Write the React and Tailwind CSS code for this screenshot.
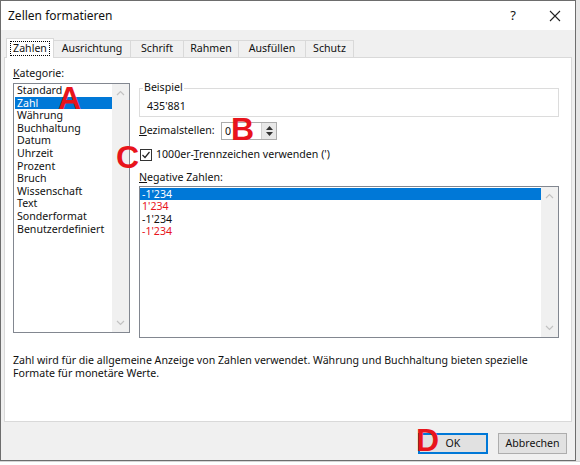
import React from "react";

const kategorien = [
  "Standard",
  "Zahl",
  "Währung",
  "Buchhaltung",
  "Datum",
  "Uhrzeit",
  "Prozent",
  "Bruch",
  "Wissenschaft",
  "Text",
  "Sonderformat",
  "Benutzerdefiniert",
];

const negative = [
  { text: "-1'234", red: false },
  { text: "1'234", red: true },
  { text: "-1'234", red: false },
  { text: "-1'234", red: true },
];

const tabs = [
  { label: "Zahlen", w: "w-[48px]" },
  { label: "Ausrichtung", w: "w-[77px]" },
  { label: "Schrift", w: "w-[53px]" },
  { label: "Rahmen", w: "w-[55px]" },
  { label: "Ausfüllen", w: "w-[67px]" },
  { label: "Schutz", w: "w-[48px]" },
];

function Chevron({ up }) {
  return (
    <svg width="9" height="6" viewBox="0 0 9 6" className="text-[#c2c2c2]">
      <path d={up ? "M1 5 L4.5 1.5 L8 5" : "M1 1 L4.5 4.5 L8 1"} fill="none" stroke="currentColor" strokeWidth="1.2" />
    </svg>
  );
}

function Scrollbar() {
  return (
    <div className="w-[17px] bg-[#f0f0f0] flex flex-col items-center justify-between py-[6px]">
      <Chevron up />
      <Chevron />
    </div>
  );
}

function Marker({ children, className }) {
  return (
    <span
      className={
        "absolute text-[#e8141c] text-[32px] leading-none font-bold pointer-events-none " + className
      }
      style={{ fontFamily: "'Liberation Sans', Arial, sans-serif" }}
    >
      {children}
    </span>
  );
}

export default function App() {
  return (
    <div
      className="relative w-[580px] h-[465px] bg-white overflow-hidden flex flex-col text-[10.6px] text-[#111]"
      style={{ fontFamily: "'Noto Sans', 'Open Sans', sans-serif" }}
    >
      <div className="flex">
        {/* dialog */}
        <div className="w-[576px] h-[461px] border border-[#6d6d6d] bg-[#f0f0f0] flex flex-col">
          <div className="h-[29px] bg-white flex items-center pl-[7px] pr-[14px] text-[12px]">
            <span className="flex-1">Zellen formatieren</span>
            <span className="mr-[33px] text-[13px]">?</span>
            <svg width="12" height="12" viewBox="0 0 12 12">
              <path d="M1 1 L11 11 M11 1 L1 11" stroke="#222" strokeWidth="1.1" />
            </svg>
          </div>

          <div className="flex flex-col px-[3px] pt-[8px]">
            {/* tabs */}
            <div className="flex h-[19px] pl-[2px] items-end">
              {tabs.map((t, i) =>
                i === 0 ? (
                  <div
                    key={t.label}
                    className={t.w + " h-[20px] -mb-[1px] bg-white border border-b-0 border-[#d9d9d9] flex items-center justify-center z-10"}
                  >
                    <span className="border border-dotted border-black px-[2px] leading-[13px]">{t.label}</span>
                  </div>
                ) : (
                  <div
                    key={t.label}
                    className={t.w + " h-[17px] bg-[#f0f0f0] border border-b-0 border-l-0 border-[#d9d9d9] flex items-center justify-center"}
                  >
                    {t.label}
                  </div>
                )
              )}
            </div>

            {/* panel */}
            <div className="h-[365px] bg-white border border-[#d9d9d9] flex flex-col px-[8px] pt-[7px]">
              <div className="flex gap-[9px]">
                <div className="w-[117px] flex flex-col">
                  <div className="h-[16px] leading-[16px]">
                    <span className="underline">K</span>ategorie:
                  </div>
                  <div className="h-[250px] mt-[2px] border border-[#828790] flex">
                    <div className="flex-1 flex flex-col pl-[1px]">
                      {kategorien.map((k) => (
                        <div
                          key={k}
                          className={
                            "h-[12.6px] leading-[12.6px] pl-[2px] " +
                            (k === "Zahl" ? "bg-[#0078d7] text-white" : "")
                          }
                        >
                          {k}
                        </div>
                      ))}
                    </div>
                    <Scrollbar />
                  </div>
                </div>

                <div className="flex-1 flex flex-col pr-[4px]">
                  <div className="h-[18px]" />
                  <div className="relative mt-[5px] h-[29px] border border-[#dcdcdc] flex items-center pl-[7px] pt-[8px]">
                    <span className="absolute -top-[9px] left-[3px] bg-white px-[1px] leading-[14px]">Beispiel</span>
                    <span>435'881</span>
                  </div>

                  <div className="flex items-center h-[18px] mt-[5px]">
                    <span className="w-[82px]">
                      <span className="underline">D</span>ezimalstellen:
                    </span>
                    <div className="w-[56px] h-[18px] border border-[#acacac] flex">
                      <span className="flex-1 pl-[3px] leading-[16px]">0</span>
                      <div className="w-[15px] bg-[#e8e8e8] border-l border-[#d0d0d0] flex flex-col items-center justify-center gap-[2px]">
                        <svg width="7" height="4" viewBox="0 0 7 4"><path d="M0 4 L3.5 0 L7 4Z" fill="#333" /></svg>
                        <svg width="7" height="4" viewBox="0 0 7 4"><path d="M0 0 L3.5 4 L7 0Z" fill="#333" /></svg>
                      </div>
                    </div>
                  </div>

                  <div className="flex items-center h-[14px] mt-[8px] pl-[1px]">
                    <div className="w-[12px] h-[12px] border border-[#333] flex items-center justify-center mr-[4px]">
                      <svg width="10" height="10" viewBox="0 0 10 10">
                        <path d="M1.5 5 L4 7.5 L8.5 2" fill="none" stroke="#222" strokeWidth="1.2" />
                      </svg>
                    </div>
                    <span>
                      1000er-<span className="underline">T</span>rennzeichen verwenden (')
                    </span>
                  </div>

                  <div className="h-[14px] leading-[14px] mt-[8px]">
                    <span className="underline">N</span>egative Zahlen:
                  </div>
                  <div className="h-[152px] mt-[2px] border border-[#828790] flex">
                    <div className="flex-1 flex flex-col pt-[1px]">
                      {negative.map((n, i) => (
                        <div
                          key={i}
                          className={
                            "h-[12.3px] leading-[12.3px] pl-[2px] " +
                            (i === 0 ? "bg-[#0078d7] text-white" : n.red ? "text-[#e8141c]" : "")
                          }
                        >
                          {n.text}
                        </div>
                      ))}
                    </div>
                    <Scrollbar />
                  </div>
                </div>
              </div>

              <p className="mt-[16px] leading-[13px]">
                Zahl wird für die allgemeine Anzeige von Zahlen verwendet. Währung und Buchhaltung bieten spezielle
                Formate für monetäre Werte.
              </p>
            </div>

            {/* buttons */}
            <div className="flex justify-end gap-[10px] pr-[5px] mt-[11px]">
              <button className="w-[70px] h-[21px] bg-[#e1e1e1] border-2 border-[#0078d7] flex items-center justify-center">
                OK
              </button>
              <button className="w-[69px] h-[21px] bg-[#e1e1e1] border border-[#adadad] flex items-center justify-center">
                Abbrechen
              </button>
            </div>
          </div>
        </div>
        <div className="flex-1 bg-[#e6e6e6]" />
      </div>
      <div className="flex-1 bg-white border-t border-[#d4d4d4]" />

      <Marker className="left-[58px] top-[82px]">A</Marker>
      <Marker className="left-[231px] top-[113px]">B</Marker>
      <Marker className="left-[116px] top-[141px]">C</Marker>
      <Marker className="left-[416px] top-[424px]">D</Marker>
    </div>
  );
}
